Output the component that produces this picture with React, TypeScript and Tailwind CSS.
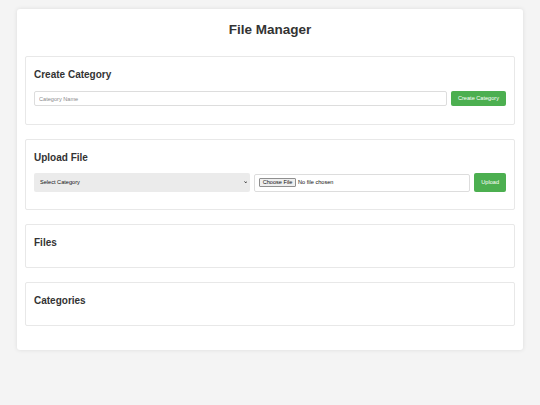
import React from "react";

const font = { fontFamily: '"Liberation Sans", Arial, sans-serif' };

function Section({ title }: { title: string }) {
  return (
    <section className="border border-[#e8e8e8] rounded-[2px] px-[8px] pt-[12px] pb-[18px] bg-white">
      <h2 className="text-[10px] leading-[12px] font-bold text-[#333]">{title}</h2>
    </section>
  );
}

export default function App() {
  return (
    <div className="min-h-screen bg-[#f4f4f4] pt-[9px] px-[17px]" style={font}>
      <div className="bg-white rounded-[3px] shadow-[0_0_4px_rgba(0,0,0,0.1)] px-[8px] pt-[12px] pb-[24px]">
        <h1 className="text-center text-[13.5px] leading-[17px] font-bold text-[#333] mb-[18px]">File Manager</h1>
        <div className="flex flex-col gap-[14px]">
          <section className="border border-[#e8e8e8] rounded-[2px] px-[8px] pt-[12px] pb-[18px]">
            <h2 className="text-[10px] leading-[12px] font-bold text-[#333] mb-[10px]">Create Category</h2>
            <div className="flex gap-[4px]">
              <input
                type="text"
                placeholder="Category Name"
                className="block flex-1 min-w-0 h-[15px] border border-[#dddddd] rounded-[2px] px-[4px] text-[5.6px] text-[#333] placeholder:text-[#8a8a8a] outline-none"
                style={font}
              />
              <button className="block h-[15px] px-[7px] bg-[#4caf50] text-white text-[5.6px] rounded-[2px] whitespace-nowrap" style={font}>
                Create Category
              </button>
            </div>
          </section>

          <section className="border border-[#e8e8e8] rounded-[2px] px-[8px] pt-[12px] pb-[17px]">
            <h2 className="text-[10px] leading-[12px] font-bold text-[#333] mb-[9px]">Upload File</h2>
            <div className="grid grid-cols-[1fr_1fr_auto] items-center gap-[4.5px] h-[19px]">
              <div className="relative min-w-0 h-[19px]">
                <select
                  className="block w-full h-[19px] appearance-none bg-[#ebebeb] rounded-[2px] pl-[6px] pr-[10px] text-[5.6px] text-[#111] outline-none"
                  style={font}
                  defaultValue=""
                >
                  <option value="">Select Category</option>
                </select>
                <svg className="absolute right-[2.5px] top-[8px] w-[3.5px] h-[2.5px] pointer-events-none" viewBox="0 0 8 6">
                  <path d="M1 1 L4 4.5 L7 1" fill="none" stroke="#222" strokeWidth="2" />
                </svg>
              </div>
              <div className="min-w-0 h-[18px] border border-[#dddddd] rounded-[2px] pl-[4px] flex items-center gap-[2px] text-[5.6px] text-[#111]">
                <span className="h-[9px] px-[2.5px] flex items-center border border-[#8f8f8f] bg-[#efefef] rounded-[1px] whitespace-nowrap leading-none">
                  Choose File
                </span>
                <span className="whitespace-nowrap">No file chosen</span>
              </div>
              <button className="block h-[19px] px-[7px] bg-[#4caf50] text-white text-[5.6px] rounded-[2px]" style={font}>
                Upload
              </button>
            </div>
          </section>

          <Section title="Files" />
          <Section title="Categories" />
        </div>
      </div>
    </div>
  );
}
